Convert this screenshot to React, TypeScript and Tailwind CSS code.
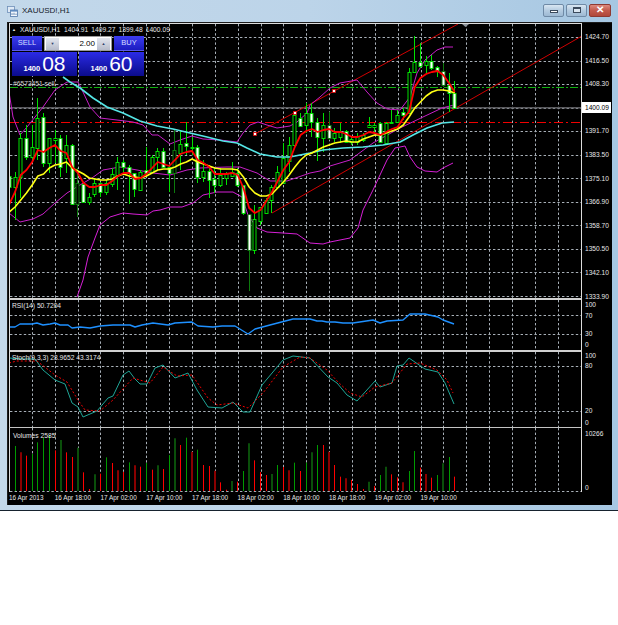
import type { ReactNode } from "react";

const barX = (i: number) => 9.33 + 5.71 * i;
const crisp = (v: number) => Math.floor(v) + 0.5;
const toPoints = (p: number[][]) => p.map((q) => q.join(",")).join(" ");
const series = (ys: number[]) => toPoints(ys.map((y, i) => [barX(i), y]));

// wickTop, bodyTop, bodyBottom, wickBottom, white body
const candles = [
  [165, 176, 187, 193, 1], [172, 177, 187, 220, 0], [133, 138, 177, 198, 0], [125, 138, 157, 160, 1],
  [125, 147, 157, 162, 0], [98, 118, 148, 160, 0], [113, 117, 163, 167, 1], [138, 138, 163, 173, 0],
  [130, 138, 140, 163, 0], [135, 138, 167, 177, 1], [135, 145, 158, 173, 0], [144, 145, 204, 205, 1],
  [168, 183, 204, 217, 0], [182, 184, 202, 203, 1], [193, 197, 202, 205, 0], [178, 183, 194, 197, 0],
  [182, 183, 192, 197, 1], [180, 183, 192, 195, 0], [168, 174, 184, 187, 0], [157, 162, 175, 190, 0],
  [160, 162, 167, 175, 1], [165, 167, 173, 204, 1], [173, 173, 189, 197, 1], [170, 172, 190, 190, 0],
  [147, 170, 173, 175, 1], [155, 157, 172, 173, 0], [148, 151, 157, 170, 0], [148, 151, 167, 167, 1],
  [165, 167, 173, 192, 1], [130, 150, 173, 193, 0], [131, 144, 153, 170, 0], [122, 143, 146, 155, 1],
  [137, 147, 148, 155, 1], [145, 147, 177, 183, 1], [160, 171, 177, 182, 0], [165, 171, 180, 198, 1],
  [168, 179, 185, 193, 1], [168, 175, 185, 187, 0], [172, 173, 178, 185, 0], [162, 172, 176, 177, 0],
  [168, 173, 185, 187, 1], [185, 185, 213, 215, 1], [214, 214, 250, 291, 1], [205, 219, 250, 254, 0],
  [207, 207, 221, 225, 0], [198, 200, 213, 213, 0], [185, 187, 200, 213, 0], [166, 172, 187, 187, 0],
  [143, 158, 183, 183, 0], [137, 145, 161, 172, 0], [112, 115, 145, 145, 0], [113, 118, 126, 127, 1],
  [103, 113, 125, 133, 0], [103, 113, 122, 137, 1], [118, 122, 137, 161, 1], [113, 125, 138, 152, 0],
  [112, 125, 138, 140, 1], [128, 133, 138, 142, 0], [123, 132, 137, 143, 0], [130, 131, 142, 143, 1],
  [137, 139, 142, 145, 0], [133, 136, 142, 145, 0], [133, 135, 140, 142, 0], [117, 125, 127, 127, 0],
  [123, 125, 127, 133, 0], [122, 123, 142, 142, 1], [122, 123, 143, 145, 0], [110, 122, 123, 123, 0],
  [110, 115, 122, 123, 0], [108, 112, 115, 120, 1], [68, 72, 113, 113, 0], [36, 62, 72, 72, 0],
  [43, 62, 66, 68, 1], [56, 61, 65, 73, 0], [55, 61, 68, 70, 1], [66, 67, 71, 77, 1],
  [63, 71, 85, 87, 1], [73, 85, 93, 112, 1], [81, 93, 108, 108, 1],
];
const darkWicks = [12, 29, 42, 56, 76];

const redMa = [
  204, 192, 175, 170, 162, 150, 152, 148, 145, 151, 153, 167, 173, 183, 187, 187, 185, 185, 181, 176, 173, 173, 179,
  178, 174, 168, 162, 164, 166, 160, 154, 152, 151, 160, 163, 167, 174, 174, 174, 173, 175, 188, 208, 213, 210, 201,
  192, 181, 170, 162, 147, 135, 131, 129, 132, 130, 129, 132, 132, 134, 137, 137, 135, 132, 133, 135, 132, 129, 127,
  118, 112, 87, 78, 74, 72, 71, 75, 83, 92,
];
const yellowMa = [
  212, 207, 200, 193, 185, 176, 174, 168, 165, 164, 162, 168, 171, 174, 178, 179, 180, 180, 179, 176, 174, 176, 177,
  178, 176, 173, 170, 169, 169, 167, 164, 162, 159, 162, 164, 166, 168, 169, 169, 169, 170, 177, 187, 193, 196, 196,
  194, 188, 182, 175, 167, 160, 155, 153, 150, 147, 145, 143, 142, 141, 142, 142, 139, 137, 135, 135, 133, 131, 129,
  125, 117, 108, 102, 96, 92, 90, 90, 91, 93,
];
const cyanMa = [
  [63, 77], [70, 82], [80, 88], [93, 98], [107, 107], [123, 113], [140, 121], [157, 126], [173, 129], [190, 133],
  [207, 137], [223, 141], [237, 143], [247, 148], [260, 154], [277, 157], [290, 157], [300, 155], [310, 153],
  [323, 150], [343, 148], [363, 147], [383, 145], [400, 142], [413, 135], [427, 128], [442, 123], [454, 122],
];
const bandUpper = [
  [9, 92], [13, 117], [20, 135], [27, 127], [35, 117], [43, 107], [55, 90], [67, 82], [78, 82], [83, 92], [90, 107],
  [100, 118], [117, 120], [133, 122], [143, 125], [152, 135], [158, 135], [170, 144], [180, 140], [192, 136],
  [203, 139], [220, 140], [237, 142], [243, 133], [250, 125], [258, 122], [267, 125], [277, 128], [290, 126],
  [297, 122], [307, 113], [310, 105], [320, 97], [330, 88], [340, 83], [357, 80], [367, 92], [377, 103], [387, 109],
  [400, 110], [410, 97], [417, 73], [425, 60], [437, 50], [445, 47], [453, 47],
];
const bandMiddle = [
  [9, 213], [20, 222], [33, 219], [43, 214], [55, 203], [67, 193], [80, 185], [92, 178], [103, 170], [120, 167],
  [137, 170], [153, 173], [170, 175], [187, 170], [200, 168], [227, 167], [240, 167], [257, 173], [270, 181],
  [287, 181], [310, 173], [320, 171], [330, 166], [340, 163], [350, 160], [373, 143], [400, 128], [423, 117],
  [442, 108], [454, 105],
];
const bandLower = [
  [77, 297], [83, 280], [88, 257], [95, 238], [100, 225], [110, 217], [123, 213], [133, 214], [147, 215], [153, 211],
  [160, 210], [170, 207], [182, 207], [193, 203], [203, 195], [217, 192], [233, 192], [242, 197], [248, 215],
  [257, 228], [267, 232], [283, 233], [297, 234], [310, 243], [323, 244], [330, 242], [350, 238], [358, 228],
  [363, 210], [373, 190], [387, 160], [395, 148], [405, 146], [410, 157], [417, 167], [425, 171], [437, 172],
  [443, 168], [453, 163],
];
const rsi = [
  [9, 327], [15, 327], [20, 324], [32, 324], [37, 323], [43, 325], [50, 324], [55, 323], [60, 325], [68, 325],
  [72, 328], [80, 327], [90, 328], [100, 326], [113, 325], [130, 325], [135, 327], [142, 325], [153, 323], [168, 325],
  [175, 323], [192, 322], [198, 326], [213, 327], [222, 326], [235, 326], [248, 334], [255, 329], [270, 325],
  [293, 319], [310, 319], [317, 321], [322, 321], [327, 322], [335, 322], [343, 323], [353, 323], [373, 320],
  [380, 323], [387, 321], [403, 320], [410, 314], [425, 314], [438, 317], [443, 320], [454, 324],
];
const stochMain = [
  [9, 358], [23, 359], [35, 359], [43, 370], [55, 380], [65, 384], [72, 403], [78, 407], [83, 417], [97, 411],
  [108, 398], [113, 396], [123, 375], [129, 371], [135, 379], [140, 384], [147, 384], [155, 368], [163, 365],
  [175, 378], [188, 373], [197, 390], [208, 407], [222, 408], [233, 402], [243, 412], [250, 412], [262, 385],
  [283, 360], [293, 356], [310, 358], [328, 377], [337, 383], [347, 395], [357, 401], [375, 381], [380, 387],
  [392, 383], [397, 366], [403, 365], [409, 358], [425, 369], [438, 372], [445, 383], [454, 404],
];
const stochSignal = [
  [9, 363], [17, 361], [37, 361], [55, 375], [67, 382], [78, 400], [85, 410], [100, 411], [113, 400], [133, 378],
  [150, 383], [163, 367], [177, 376], [192, 375], [208, 398], [217, 405], [233, 403], [248, 408], [263, 393],
  [283, 367], [300, 357], [310, 358], [327, 370], [338, 382], [350, 393], [362, 397], [375, 387], [392, 383],
  [407, 364], [420, 363], [437, 370], [447, 380], [453, 393],
];

// bar top as measured, colour: r red, d dark red, g green, k dark green
const volumes: [number, string][] = [
  [100, "r"], [63, "g"], [82, "d"], [92, "r"], [87, "g"], [52, "g"], [38, "g"], [30, "g"], [76, "r"], [45, "k"],
  [82, "r"], [96, "r"], [68, "k"], [142, "r"], [192, "r"], [148, "k"], [146, "r"], [97, "g"], [114, "r"], [136, "d"],
  [141, "r"], [112, "g"], [121, "d"], [125, "r"], [114, "g"], [134, "r"], [121, "k"], [132, "r"], [90, "g"], [40, "k"],
  [60, "r"], [38, "g"], [80, "d"], [74, "g"], [120, "r"], [123, "r"], [137, "d"], [172, "r"], [194, "r"], [168, "k"],
  [170, "r"], [138, "g"], [55, "k"], [106, "r"], [141, "r"], [150, "r"], [147, "k"], [120, "g"], [126, "r"], [136, "d"],
  [113, "g"], [138, "r"], [113, "g"], [82, "k"], [60, "g"], [60, "r"], [80, "d"], [120, "r"], [155, "r"], [160, "d"],
  [165, "r"], [177, "r"], [192, "r"], [170, "k"], [183, "r"], [150, "g"], [125, "k"], [148, "r"], [157, "r"], [172, "d"],
  [138, "g"], [78, "g"], [128, "r"], [147, "d"], [158, "r"], [150, "g"], [115, "k"], [96, "g"], [155, "r"],
];
const volumeColors: Record<string, string> = { r: "#ff0000", d: "#8a0000", g: "#009a00", k: "#0a4f0a" };

const gridX = Array.from({ length: 24 }, (_, k) => crisp(32.3 + 22.87 * k));
const priceRows = [
  "1424.70", "1416.50", "1408.30", "1400.09", "1391.70", "1383.50", "1375.10", "1366.90", "1358.70", "1350.50",
  "1342.10", "1333.90",
];
const dates = [
  "16 Apr 2013", "16 Apr 18:00", "17 Apr 02:00", "17 Apr 10:00", "17 Apr 18:00", "18 Apr 02:00", "18 Apr 10:00",
  "18 Apr 18:00", "19 Apr 02:00", "19 Apr 10:00",
];

function Grid({ top, bottom, rows }: { top: number; bottom: number; rows: number[] }) {
  return (
    <g stroke="#a8b0b8" strokeWidth="1" strokeDasharray="2.4 2.2">
      {gridX.map((x) => (
        <line key={x} x1={x} x2={x} y1={top} y2={bottom} />
      ))}
      {rows.map((y) => (
        <line key={y} x1={10} x2={581} y1={crisp(y)} y2={crisp(y)} />
      ))}
    </g>
  );
}

function Line({ points, color, width = 1 }: { points: string; color: string; width?: number }) {
  return <polyline points={points} fill="none" stroke={color} strokeWidth={width} strokeLinejoin="round" />;
}

function Marker({ x, y }: { x: number; y: number }) {
  return <rect x={x - 1.5} y={y - 1.5} width="3" height="3" fill="#fff" stroke="#e00000" strokeWidth="0.8" />;
}

function PriceChart() {
  return (
    <svg className="block h-[274px] w-[571px]" viewBox="10 24 571 274">
      <Grid top={24} bottom={298} rows={[37, 61, 84, 108, 131, 155, 178, 202, 225, 249, 272, 296]} />
      <line x1="10" x2="581" y1="87.5" y2="87.5" stroke="#10b010" strokeWidth="1" strokeDasharray="8 2 2 2" />
      <line x1="10" x2="581" y1="107.8" y2="107.8" stroke="#5a5a5e" strokeWidth="1.5" />
      <line x1="10" x2="581" y1="122.5" y2="122.5" stroke="#f00000" strokeWidth="1" strokeDasharray="9 3 2 3" />
      <line x1="255" y1="134" x2="458" y2="24" stroke="#d00000" strokeWidth="1" />
      <line x1="272" y1="213" x2="581" y2="36.5" stroke="#d00000" strokeWidth="1" />
      <polygon points="462,24 469,24 465.5,27" fill="#8d949c" />
      <Line points={toPoints(bandUpper)} color="#c81fc8" />
      <Line points={toPoints(bandMiddle)} color="#c81fc8" />
      <Line points={toPoints(bandLower)} color="#d61fd6" />
      {candles.map((c, i) => {
        const x = crisp(barX(i));
        const stroke = darkWicks.includes(i) ? "#0d7a0d" : "#00e000";
        return (
          <g key={i}>
            <line x1={x} x2={x} y1={c[0]} y2={c[3]} stroke={stroke} strokeWidth="1" />
            <rect
              x={x - 1.5}
              y={crisp(c[1])}
              width="3"
              height={Math.max(c[2] - c[1], 1)}
              fill={c[4] ? "#ffffff" : "#000000"}
              stroke={stroke}
              strokeWidth="1"
            />
          </g>
        );
      })}
      <Line points={toPoints(cyanMa)} color="#55e6e6" width={1.6} />
      <Line points={series(yellowMa)} color="#ffff14" width={1.6} />
      <Line points={series(redMa)} color="#ff0000" width={1.8} />
      <Marker x={255} y={134} />
      <Marker x={295} y={113} />
      <Marker x={334} y={91} />
    </svg>
  );
}

function RsiChart() {
  return (
    <svg className="block h-[50px] w-[571px]" viewBox="10 300 571 50">
      <Grid top={300} bottom={350} rows={[315, 334.3]} />
      <Line points={toPoints(rsi)} color="#1e90ff" width={1.4} />
    </svg>
  );
}

function StochChart() {
  return (
    <svg className="block h-[75px] w-[571px]" viewBox="10 352 571 75">
      <Grid top={352} bottom={427} rows={[366.3, 411.7]} />
      <Line points={toPoints(stochMain)} color="#1fa596" />
      <polyline
        points={toPoints(stochSignal)}
        fill="none"
        stroke="#f00000"
        strokeWidth="1"
        strokeDasharray="2 2"
      />
    </svg>
  );
}

function VolumeChart() {
  return (
    <svg className="block h-[64px] w-[571px]" viewBox="10 428 571 64">
      <Grid top={428} bottom={491} rows={[491.4]} />
      {volumes.map(([top, color], i) => {
        const dark = color === "d" || color === "k";
        const x = dark ? Math.round(barX(i)) : crisp(barX(i));
        return (
          <line
            key={i}
            x1={x}
            x2={x}
            y1={425 + top / 3}
            y2={491}
            stroke={volumeColors[color]}
            strokeWidth={dark ? 2 : 1}
          />
        );
      })}
    </svg>
  );
}

function Pane({ border, chart, axis, label }: { border: string; chart: ReactNode; axis: ReactNode; label: ReactNode }) {
  return (
    <div className="flex">
      <div className={`relative border-x border-[#dcdcdc] ${border}`}>
        {chart}
        {label}
      </div>
      <div className={`w-[29px] pl-[3px] text-[6.6px] text-[#e6e6e6] ${border} border-t-transparent`}>
        <div className="h-0">{axis}</div>
      </div>
    </div>
  );
}

function PriceBox({ side, cents }: { side: string; cents: string }) {
  return (
    <div
      aria-label={side}
      className="flex h-[24px] w-[65px] items-end justify-center gap-[2px] bg-gradient-to-b from-[#2b2be6] to-[#0b0b8c] pb-[1px] text-white"
    >
      <span className="pb-[1px] text-[7.5px] font-bold leading-[10px]">1400</span>
      <span className="text-[21px] leading-[23px]">{cents}</span>
    </div>
  );
}

function TradeButton({ text }: { text: string }) {
  return (
    <div className="flex h-[15px] w-[30px] items-center justify-center border-b border-[#5a5ae8] bg-gradient-to-b from-[#3c3cf0] to-[#1c1cc0] text-[7.5px] text-[#d5dcff]">
      {text}
    </div>
  );
}

function SpinButton({ glyph }: { glyph: string }) {
  return (
    <div className="flex h-[12px] w-[13px] items-center justify-center bg-gradient-to-b from-[#e3e6ee] to-[#b7bccb] text-[4px] text-[#30406a]">
      {glyph}
    </div>
  );
}

function TradePanel() {
  return (
    <div className="absolute left-[2px] top-[12px] flex w-[132px] flex-col gap-[1px]">
      <div className="flex items-center justify-between">
        <TradeButton text="SELL" />
        <div className="flex h-[15px] w-[68px] items-center justify-between border border-[#9a9a9a] bg-white px-[1px] text-[8px] text-black">
          <SpinButton glyph="▼" />
          <span className="ml-auto pr-[2px]">2.00</span>
          <SpinButton glyph="▲" />
        </div>
        <TradeButton text="BUY" />
      </div>
      <div className="flex justify-between">
        <PriceBox side="sell" cents="08" />
        <PriceBox side="buy" cents="60" />
      </div>
    </div>
  );
}

function WindowIcon() {
  return (
    <svg className="h-[11px] w-[11px]" viewBox="0 0 11 11">
      <rect x="0.5" y="0.5" width="7" height="6" fill="#dfeaf6" stroke="#6f8fb8" strokeWidth="0.8" />
      <rect x="3.5" y="4" width="7" height="6.5" fill="#f2f7fc" stroke="#4f76a8" strokeWidth="0.8" />
      <rect x="3.5" y="4" width="7" height="1.6" fill="#5f8bc0" />
      <path d="M5 9V7.2M7 9V6.8M9 9V7.6" stroke="#3f6a9f" strokeWidth="0.8" />
    </svg>
  );
}

function WindowButton({ className, children, width }: { className: string; children: ReactNode; width: string }) {
  return (
    <div className={`flex h-[13px] items-center justify-center rounded-[2px] border ${width} ${className}`}>
      {children}
    </div>
  );
}

const glassButton = "border-[#6f8aa6] bg-gradient-to-b from-[#d9e6f2] via-[#b4cbe0] to-[#9db9d3]";

export default function App() {
  return (
    <div className="h-[625px] w-[618px] bg-white [font-family:'Liberation_Sans',Arial,sans-serif]">
      <div className="flex h-[511px] flex-col border-b border-[#16222e] bg-gradient-to-r from-[#c3d8ea] via-[#bcd4e9] to-[#a6c7e2]">
        {/* Title bar */}
        <div className="flex h-[22px] shrink-0 items-center pl-[7px] pr-[7px]">
          <WindowIcon />
          <span className="ml-[4px] text-[8px] text-[#15202b]">XAUUSD!,H1</span>
          <div className="ml-auto flex gap-[2px] pb-[2px]">
            <WindowButton width="w-[21px]" className={glassButton}>
              <div className="mt-[3px] h-[3px] w-[8px] border border-[#3b4a5c] bg-white" />
            </WindowButton>
            <WindowButton width="w-[21px]" className={glassButton}>
              <div className="h-[6px] w-[8px] border border-[#3b4a5c] border-t-2 bg-[#dbe6f1]" />
            </WindowButton>
            <WindowButton width="w-[22px]" className="border-[#8e3a32] bg-gradient-to-b from-[#dc8a7e] via-[#c25a4c] to-[#b0473a]">
              <span className="text-[10px] font-bold leading-none text-white">✕</span>
            </WindowButton>
          </div>
        </div>

        {/* Chart */}
        <div className="ml-[7px] w-[605px] border-l border-t border-[#1c1c1c] bg-black pb-[1px] pl-[1px]">
          <Pane
            border="border-t border-t-[#dcdcdc]"
            chart={<PriceChart />}
            label={
              <>
                <div className="absolute left-[2px] top-[1px] flex items-center gap-[3px] text-[6.7px] leading-[9px] text-[#e8e8e8]">
                  <span className="text-[4px] leading-[9px]">▲</span>
                  <span className="ml-[1px]">XAUUSD!,H1</span>
                  <span className="ml-[1px]">1404.91</span>
                  <span>1409.27</span>
                  <span>1399.48</span>
                  <span>1400.09</span>
                </div>
                <TradePanel />
                <span className="absolute left-[3px] top-[55px] text-[6.7px] leading-[9px] text-[#d6d6d6]">
                  #6573451 sell
                </span>
              </>
            }
            axis={
              <div className="pt-[1.2px]">
                {priceRows.map((p) =>
                  p === "1400.09" ? (
                    <div key={p} className="flex h-[23.6px] items-center">
                      <span className="-ml-[3px] w-[29px] bg-white pl-[3px] leading-[11px] text-black">{p}</span>
                    </div>
                  ) : (
                    <div key={p} className="flex h-[23.6px] items-center">
                      {p}
                    </div>
                  ),
                )}
              </div>
            }
          />
          <Pane
            border="border-t-2 border-t-[#d0d0d0]"
            chart={<RsiChart />}
            label={
              <span className="absolute left-[2px] top-[1px] text-[6.7px] leading-[9px] text-[#e8e8e8]">
                RSI(14) 50.7204
              </span>
            }
            axis={
              <div className="-mt-[1.5px] leading-[11px]">
                <div className="h-[11px]">100</div>
                <div className="h-[11px]">70</div>
                <div className="mt-[7.5px] h-[11px]">30</div>
                <div className="h-[11px]">0</div>
              </div>
            }
          />
          <Pane
            border="border-t-2 border-t-[#d0d0d0]"
            chart={<StochChart />}
            label={
              <span className="absolute left-[2px] top-[1px] text-[6.7px] leading-[9px] text-[#e8e8e8]">
                Stoch(9,3,3) 28.9652 43.3174
              </span>
            }
            axis={
              <div className="-mt-[1px] leading-[10px]">
                <div className="h-[10px]">100</div>
                <div className="h-[10px]">80</div>
                <div className="mt-[35px] h-[10px]">20</div>
                <div className="mt-[1.5px] h-[10px]">0</div>
              </div>
            }
          />
          <Pane
            border="border-t border-t-[#c4c4c4]"
            chart={<VolumeChart />}
            label={
              <span className="absolute left-[3px] top-[3px] text-[6.7px] leading-[9px] text-[#e8e8e8]">
                Volumes 2585
              </span>
            }
            axis={
              <div className="leading-[11px]">
                <div className="h-[11px]">10266</div>
                <div className="mt-[42.5px] h-[11px]">0</div>
              </div>
            }
          />
          <div className="flex h-[12px] items-center text-[6.4px] text-[#e8e8e8]">
            {dates.map((d) => (
              <div key={d} className="w-[45.72px] whitespace-nowrap">
                {d}
              </div>
            ))}
          </div>
        </div>
      </div>
    </div>
  );
}
